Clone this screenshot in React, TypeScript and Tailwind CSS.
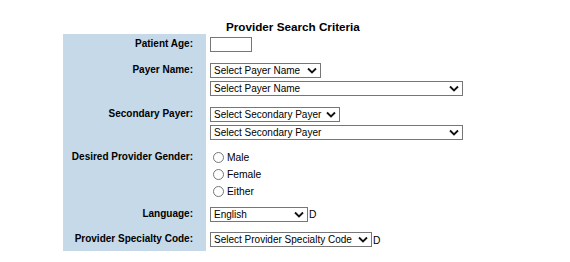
import React from "react";

function Chevron() {
  return (
    <svg width="10" height="7" viewBox="0 0 10 7" className="shrink-0">
      <path d="M1 1.5 L5 5.5 L9 1.5" fill="none" stroke="#111" strokeWidth="1.8" />
    </svg>
  );
}

function Select({ label, width }: { label: string; width: string }) {
  return (
    <div
      className={`flex h-[15px] items-center justify-between border border-[#767676] bg-white pl-[3px] pr-[3px] text-[10px] leading-none text-black ${width}`}
    >
      <span className="whitespace-nowrap">{label}</span>
      <Chevron />
    </div>
  );
}

function Radio({ label }: { label: string }) {
  return (
    <div className="flex h-[17px] items-center gap-[3px] text-[10.3px] text-black">
      <span className="ml-[3px] h-[11px] w-[11px] rounded-full border border-[#767676] bg-white" />
      <span>{label}</span>
    </div>
  );
}

function Label({ text, pad }: { text: string; pad: string }) {
  return (
    <div
      className={`w-[143px] shrink-0 whitespace-nowrap bg-[#c5d9e9] pr-[13px] text-right text-[10px] font-bold leading-[14px] text-black ${pad}`}
    >
      {text}
    </div>
  );
}

export default function App() {
  return (
    <div className="h-[262px] w-[570px] bg-white font-['Liberation_Sans',Arial,sans-serif]">
      <div className="mx-auto w-[444px] pt-[19px]">
        <div className="h-[15px] pl-[163px] text-[11.7px] font-bold leading-[15px] text-black">
          Provider Search Criteria
        </div>
        <div className="flex h-[26px]">
          <Label text="Patient Age:" pad="pt-[3px]" />
          <div className="ml-[4px] flex-1 pt-[3px]">
            <div className="h-[15px] w-[42px] border border-[#767676] bg-white" />
          </div>
        </div>
        <div className="flex h-[44px]">
          <Label text="Payer Name:" pad="pt-[3px]" />
          <div className="ml-[4px] flex flex-1 flex-col gap-[3px] pt-[3px]">
            <Select label="Select Payer Name" width="w-[111px]" />
            <Select label="Select Payer Name" width="w-[253px]" />
          </div>
        </div>
        <div className="flex h-[43px]">
          <Label text="Secondary Payer:" pad="pt-[3px]" />
          <div className="ml-[4px] flex flex-1 flex-col gap-[3px] pt-[3px]">
            <Select label="Select Secondary Payer" width="w-[130px]" />
            <Select label="Select Secondary Payer" width="w-[253px]" />
          </div>
        </div>
        <div className="flex h-[56px]">
          <Label text="Desired Provider Gender:" pad="pt-[3px]" />
          <div className="ml-[4px] flex flex-1 flex-col pt-[2px]">
            <Radio label="Male" />
            <Radio label="Female" />
            <Radio label="Either" />
          </div>
        </div>
        <div className="flex h-[25px]">
          <Label text="Language:" pad="pt-[4px]" />
          <div className="ml-[4px] flex flex-1 items-start pt-[4px]">
            <Select label="English" width="w-[98px]" />
            <span className="pl-[1px] pt-[3px] text-[10.3px] leading-none text-black">D</span>
          </div>
        </div>
        <div className="flex h-[23px]">
          <Label text="Provider Specialty Code:" pad="pt-[4px]" />
          <div className="ml-[4px] flex flex-1 items-start pt-[4px]">
            <Select label="Select Provider Specialty Code" width="w-[162px]" />
            <span className="pl-[1px] pt-[4px] text-[10.3px] leading-none text-black">D</span>
          </div>
        </div>
      </div>
    </div>
  );
}
